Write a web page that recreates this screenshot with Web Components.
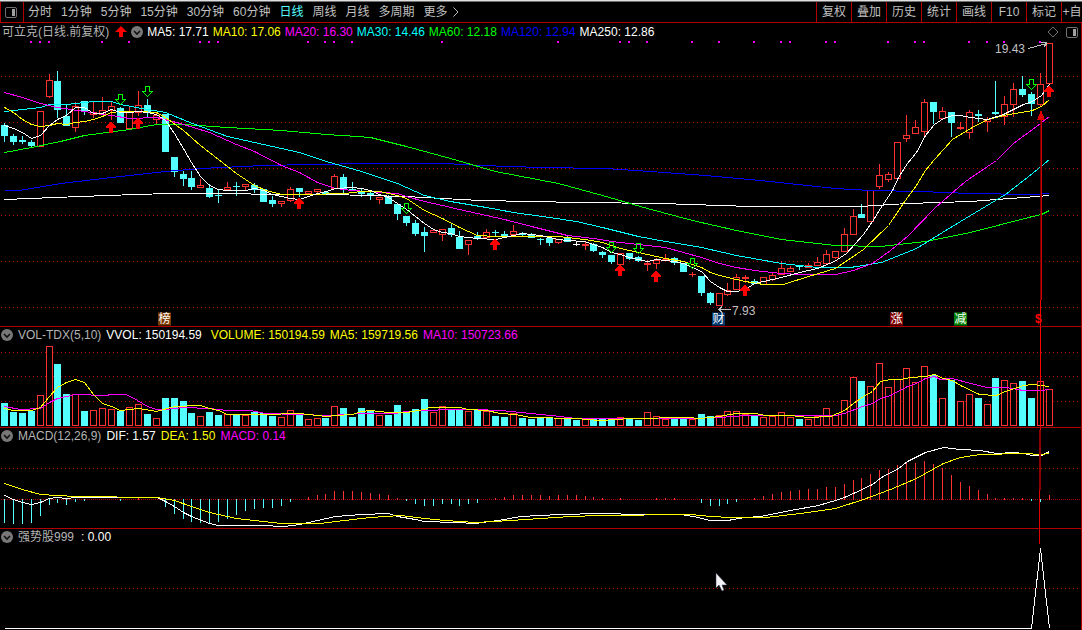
<!DOCTYPE html>
<html lang="zh-CN">
<head>
<meta charset="utf-8">
<title>可立克 日线</title>
<style>
html, body { margin: 0; background: #000; }
body { font: 12px/16px "Liberation Sans", "Noto Sans CJK SC", sans-serif; color: #c0c0c0; overflow: hidden; }
</style>
</head>
<body>
<stock-app></stock-app>
<script>
const RED = '#ff3232', CYAN = '#54ffff', WIDTH = 1081;
const slotX = i => 4 + 9 * i - Math.floor((i + 9) / 15);

// kind (u hollow red, d solid cyan, r solid red, w white), high, body top, body bottom, low
const CANDLES = `d123,125,135,141 d134,136,141,144 d136,140,141,143 d140,142,145,147 u111,111,146,146 u74,80,96,97 d71,81,109,117 d105,116,125,125 u102,106,127,131 d101,101,110,114
u101,112,114,117 u97,110,114,114 u102,106,110,119 d107,108,122,122 u107,112,128,128 u91,105,112,115 d99,105,111,116 u113,115,119,124 d114,114,151,151 d157,157,171,176
d171,174,178,185 d171,178,186,189 u179,185,187,187 d184,188,196,197 d190,195,195,202 u182,187,189,189 d182,186,186,195 u184,184,186,189 d183,185,189,192 d189,189,201,201
d196,200,203,206 u201,201,203,206 u187,189,200,201 d188,188,191,196 u191,191,193,193 u189,189,191,193 d191,192,193,194 u174,176,188,188 d174,177,188,194 d182,189,190,190
d188,191,193,196 d192,193,195,199 u197,197,199,203 d195,197,203,203 d204,204,213,219 d216,216,222,225 d220,223,233,235 d227,232,235,251 u229,230,232,232 u229,229,234,240
d224,228,234,236 d231,237,248,248 u240,240,244,254 d232,236,237,239 u229,232,237,238 d230,232,232,235 d231,234,235,235 u225,231,234,234 d232,233,234,235 d233,235,237,237
d238,239,239,244 d237,238,242,245 u239,239,242,243 d236,238,241,241 w242,244,244,245 r242,244,245,249 d243,244,250,251 d251,252,254,257 d255,255,261,263 u253,253,264,264
d253,253,258,259 d256,257,260,261 r260,263,264,270 u258,260,263,268 r254,259,259,260 d257,258,262,264 d263,263,271,271 r272,274,274,276 d276,276,292,295 d292,293,302,304
u293,293,305,305 u283,290,294,295 u274,277,289,289 r275,277,278,282 d279,281,283,283 u277,277,284,284 u273,275,279,280 u261,268,274,274 u266,268,271,271 d265,266,266,269
u263,265,266,266 u257,262,265,265 u250,254,263,263 u251,251,257,258 u228,234,251,251 u209,216,234,234 d204,214,217,217 u190,190,221,221 u164,175,186,188 u172,174,179,181
u142,142,178,178 u115,135,138,141 u120,127,133,133 u99,102,131,135 d102,102,111,123 u107,111,118,118 d112,112,122,136 r122,127,128,129 u110,112,132,138 d110,114,115,121
u117,119,121,131 d81,112,113,114 u96,104,116,124 u83,89,104,116 d76,89,94,96 d92,94,103,115 u73,84,104,105 u43,43,83,83`.split(/\s+/)
  .map(s => [s[0], ...s.slice(1).split(',').map(Number)]);

const VOLUME = [403,412,413,411,395,346,364,394,394,411,410,408,409,411,407,404,414,418,398,398,401,413,416,412,415,414,415,415,412,413,416,417,410,415,419,418,418,406,408,417,408,410,415,415,405,412,409,399,412,406,409,409,411,409,411,416,417,413,418,419,418,418,418,418,420,419,419,419,419,417,419,420,412,416,419,418,418,419,414,416,415,411,411,414,415,417,416,412,417,419,419,416,408,415,400,377,381,386,363,387,379,368,382,366,375,398,380,401,394,398,404,378,380,383,381,398,381,389];

const HIST = [522,523,523,522,515,504,502,504,501,500,0,0,0,500,0,498,0,0,506,513,518,521,522,522,521,518,514,510,508,507,507,505,501,0,497,495,494,491,491,491,492,493,494,495,498,500,503,505,505,503,503,505,503,502,0,498,497,495,495,495,495,496,495,495,495,496,497,498,0,498,0,0,0,498,498,498,0,0,502,505,505,503,501,0,498,496,494,492,491,490,489,489,487,487,484,480,478,474,470,469,465,463,463,461,464,468,475,482,486,490,494,498,498,498,498,500,501,495];

const LINES = {
  main: [
    ['#ffffff', '4,199 80,196 135,194 170,193 330,194 405,196 480,200 580,202 660,203 750,206 860,206 907,203 970,201 1049,195'],
    ['#0000ff', '4,190 18,190 31,188 60,183 111,177 165,171 200,168 263,165 310,164 370,163 445,163 480,165 540,167 605,168 650,171 705,175 760,180 835,188 870,190 920,191 970,193 1030,194 1049,193'],
    ['#00ff00', '4,152 31,147 60,141 84,135 129,129 156,124 183,124 227,127 281,130 326,134 357,136 370,137 406,146 450,158 495,171 558,183 602,195 647,208 692,220 736,230 781,239 835,245 880,246 925,241 970,232 1032,216 1041,214 1049,210'],
    ['#00ffff', '4,111 22,109 40,107 49,104 66,104 84,102 93,101 111,101 120,104 147,109 165,112 192,123 227,136 263,144 299,152 326,161 361,171 397,183 424,195 450,201 486,207 513,212 549,217 576,221 602,227 638,236 665,241 701,247 736,255 781,263 817,267 850,267 881,262 916,248 960,221 1005,194 1032,173 1049,159'],
    ['#ff00ff', '4,92 22,97 40,103 57,107 84,111 111,115 129,118 156,117 180,123 209,132 236,144 254,151 281,165 299,172 317,182 335,188 352,190 397,193 406,196 424,201 442,205 459,209 477,213 504,219 531,226 567,235 593,238 611,241 638,244 665,247 683,252 701,257 719,263 736,267 754,270 781,273 799,274 835,274 853,270 872,263 890,250 907,236 935,207 965,181 996,160 1013,143 1032,129 1049,116'],
    ['#ffff00', '4,107 13,112 22,119 31,124 40,126 49,125 57,123 66,124 75,122 84,121 93,119 102,116 111,112 120,111 138,111 156,112 165,117 183,130 200,145 218,159 236,173 254,185 266,190 281,194 308,194 344,193 361,191 379,191 397,195 406,198 424,210 442,218 459,227 477,235 495,236 522,236 558,236 567,237 584,239 602,242 620,248 647,254 665,258 683,261 692,264 701,267 710,272 719,275 736,279 745,281 763,284 783,284 808,276 835,268 863,249 888,225 907,197 916,185 925,170 934,159 952,139 970,128 987,119 1003,115 1032,110 1041,106 1049,99'],
    ['#ffffff', '4,125 13,128 22,132 31,138 40,135 49,125 57,119 66,115 75,107 84,107 93,113 102,113 111,109 120,112 129,112 138,111 147,112 156,114 165,120 174,133 183,148 191,162 200,176 209,185 218,189 227,190 245,190 254,188 263,190 272,194 281,196 290,198 299,199 308,196 317,193 326,191 335,188 352,187 361,188 370,190 379,194 388,197 397,203 406,209 415,216 424,223 433,229 442,232 450,233 459,236 468,237 477,238 495,239 504,237 513,235 522,233 531,234 540,235 549,237 558,239 567,240 584,241 593,244 602,247 611,252 620,254 629,257 638,259 647,261 656,259 674,261 683,263 692,267 701,271 710,281 719,287 727,291 736,291 745,289 754,283 763,281 781,277 799,272 817,268 834,261 846,253 863,234 872,221 880,208 892,190 898,177 907,163 916,152 925,135 934,124 943,118 952,115 960,115 970,117 987,119 1003,114 1013,109 1023,104 1032,101 1041,95 1049,84']
  ],
  vol: [
    ['#ff00ff', '4,406 20,409 40,408 49,402 57,398 75,394 105,395 111,394 125,394 132,397 147,406 156,409 165,409 183,407 209,408 227,410 250,410 265,413 330,415 361,413 395,413 405,411 425,410 450,409 475,409 500,410 530,413 560,416 575,418 690,418 719,417 745,415 835,415 844,413 862,406 872,403 880,398 890,395 907,386 916,383 925,378 934,376 940,379 952,378 970,383 987,387 1005,387 1023,390 1040,390 1049,389'],
    ['#ffff00', '4,408 13,410 31,410 40,407 49,396 57,387 66,382 75,379 84,382 93,394 102,403 111,406 120,410 138,408 156,411 174,406 200,405 209,408 218,410 227,414 263,414 299,413 326,416 335,415 352,414 361,411 370,410 388,412 406,412 424,409 429,407 459,407 468,409 486,410 500,413 515,414 530,417 575,418 600,420 630,418 687,417 700,418 719,416 735,413 755,413 765,415 790,415 808,417 830,416 844,410 853,403 863,396 872,391 880,381 890,379 900,379 910,377 925,376 934,374 943,378 952,380 960,385 979,394 996,395 1005,391 1023,385 1032,384 1049,386']
  ],
  macd: [
    ['#ffffff', '4,495 13,499 22,502 31,504 40,502 49,498 57,497 66,498 75,497 157,497 165,501 174,506 183,512 191,516 209,523 218,525 260,525 284,526 299,524 317,520 335,516 361,514 388,513 397,516 415,519 424,521 455,522 475,523 504,519 520,516 560,514 600,513 640,514 680,514 693,516 710,520 727,520 745,517 760,516 790,510 818,505 835,500 844,497 853,493 872,484 881,477 898,468 907,461 925,452 943,447 960,449 980,450 996,453 1013,452 1023,453 1032,455 1041,455 1049,451'],
    ['#ffff00', '4,483 22,489 40,494 57,495 75,496 157,497 174,500 191,506 209,512 236,518 263,521 281,523 320,523 344,520 370,517 400,515 424,518 445,520 475,522 510,520 540,518 570,516 600,515 690,514 710,516 730,517 765,517 800,513 835,508 863,499 890,489 916,478 943,463 960,457 980,454 1023,453 1041,454 1049,453']
  ],
  signal: [['#ffffff', '4,628 1031,628 1040,548 1049,628']]
};

const rect = (x, y, w, h, fill) => `<rect x="${x}" y="${y}" width="${w}" height="${h}" fill="${fill}"/>`;
const hollow = (x, y, w, h) => `<rect x="${x + .5}" y="${y + .5}" width="${w - 1}" height="${h - 1}" fill="#000" stroke="${RED}"/>`;
const dotted = (y, gap = 3, color = '#b00000') => `<line x1="1" x2="${WIDTH}" y1="${y + .5}" y2="${y + .5}" stroke="${color}" stroke-dasharray="1 ${gap}"/>`;
const polylines = list => list.map(([c, p]) => `<polyline transform="translate(.5 .5)" points="${p}" fill="none" stroke="${c}"/>`).join('');

function candles() {
  return CANDLES.map(([kind, hi, top, bottom, lo], i) => {
    const x = slotX(i), c = { u: RED, r: RED, d: CYAN, w: '#ffffff' }[kind];
    const wick = rect(x, hi, 1, lo - hi + 1, c);
    return wick + (kind === 'u' ? hollow(x - 3, top, 7, Math.max(bottom - top + 1, 3)) : rect(x - 3, top, 7, bottom - top + 1, c));
  }).join('');
}
const buyArrow = (x, y) => `<path transform="translate(${x} ${y})" fill="#ff0000" d="M0 0h1v1h1v1h1v1h1v1h1v2h-3v5h-4v-5h-3v-2h1v-1h1v-1h1v-1h1v-1h1z"/>`;
const sellArrow = (x, y) => `<path transform="translate(${x}.5 ${y}.5)" fill="none" stroke="#00ff00" d="M-2 0h4v5h3l-5 5l-5 -5h3z"/>`;

// vertical marker that runs through the panels
const beam = rect(1040, 118, 1, 182, '#700000') + rect(1041, 118, 1, 182, '#d00000') + rect(1040, 300, 1, 130, '#ff0000')
  + rect(1039, 430, 2, 60, '#900000') + rect(1039, 490, 1, 54, '#e00000');

const PLOTS = {
  main: () => [76, 122, 168, 215, 261, 307].map(y => dotted(y)).join('') + candles() + polylines(LINES.main)
    + [31,40,49,102,129,200,209,218,308,325,334,352,442,558,620,629,647,692,719,754,781,790,826,835,888,915,924,969,987,1004,1040].map(x => rect(x - 1, 41, 2, 2, '#ff00ff')).join('')
    + [[120,94],[147,86],[406,203],[611,242],[638,243],[692,258],[1031,79]].map(p => sellArrow(...p)).join('')
    + [[111,122],[138,118],[299,198],[495,239],[620,265],[656,271],[745,285],[1049,86]].map(p => buyArrow(...p)).join('')
    + beam + `<path d="M1041 110l4 10h-8z" fill="#e00000"/>`
    + `<path d="M1028 48.500L1047 43.500M1041 42.500h6M1044 46.500l3-3" fill="none" stroke="#c0c0c0"/>`
    + `<path d="M719 309.500h12M722 306.500l-3 3l3 3" fill="none" stroke="#c0c0c0"/>`,
  vol: () => [352, 376, 401].map(y => dotted(y)).join('')
    + VOLUME.map((y, i) => 'ur'.includes(CANDLES[i][0]) ? hollow(slotX(i) - 3, y, 7, 426 - y) : rect(slotX(i) - 3, y, 7, 426 - y, CYAN)).join('')
    + polylines(LINES.vol) + beam,
  macd: () => dotted(468) + dotted(499, 1)
    + HIST.map((y, i) => !y ? '' : y < 499 ? rect(slotX(i), y, 1, 500 - y, RED) : rect(slotX(i), 499, 1, y - 498, CYAN)).join('')
    + polylines(LINES.macd) + beam,
  signal: () => dotted(588) + polylines(LINES.signal) + beam
};

function define(name, html, setup) {
  const template = document.createElement('template');
  template.innerHTML = html;
  customElements.define(name, class extends HTMLElement {
    connectedCallback() {
      if (this.shadowRoot) return;
      this.attachShadow({ mode: 'open' }).append(template.content.cloneNode(true));
      if (setup) setup(this, this.shadowRoot);
    }
  });
}

define('layout-icon', `<style>
  :host { display: block; width: 12px; height: 11px; }
  svg { display: block; }
  </style><svg width="12" height="11" viewBox="0 0 12 11"><rect x=".5" y=".5" width="11" height="10" rx="1.500" fill="none" stroke="#707070"/><rect x="7" y="2" width="3" height="7" fill="#a0a0a0"/></svg>`);

define('fold-button', `<style>
  :host { display: block; width: 12px; height: 12px; }
  button { display: block; width: 12px; height: 12px; padding: 0; border: 0; background: none; }
  svg { display: block; }
  </style><button type="button" aria-label="展开"><svg width="12" height="12" viewBox="0 0 12 12"><circle cx="6" cy="6" r="6" fill="#787878"/><path d="M3 5l3 3l3-3" fill="none" stroke="#101010" stroke-width="1.600"/></svg></button>`);

define('period-tab', `<style>
  :host { display: block; }
  a { display: block; color: #c0c0c0; text-decoration: none; white-space: nowrap; }
  :host([active]) a { color: #54ffff; }
  </style><a href="#"><slot></slot></a>`);

define('tool-button', `<style>
  :host { display: block; flex: 0 0 35px; box-sizing: border-box; border-left: 1px solid #b00000; }
  :host([narrow]) { flex-basis: 21px; }
  button { display: block; width: 100%; height: 100%; padding: 0; border: 0; background: none; color: inherit; font: inherit; white-space: nowrap; text-align: center; }
  </style><button type="button"><slot></slot></button>`);

define('top-bar', `<style>
  :host { display: flex; height: 20px; border-bottom: 1px solid #b00000; border-top: 2px solid #808080; border-image: linear-gradient(#e0e0e0 0 1px, #707070 1px 2px, #b00000 2px) 2 0 1 0; }
  .layout { display: flex; align-items: center; padding: 0 6px 0 4px; border: solid #b00000; border-width: 0 1px; }
  nav { display: flex; align-items: center; gap: 9px; padding-left: 4px; flex: 1; overflow: hidden; }
  nav svg { display: block; margin-left: -4px; }
  .tools { display: flex; }
  </style>
  <div class="layout"><layout-icon></layout-icon></div>
  <nav>
    <period-tab>分时</period-tab><period-tab>1分钟</period-tab><period-tab>5分钟</period-tab><period-tab>15分钟</period-tab><period-tab>30分钟</period-tab><period-tab>60分钟</period-tab><period-tab active>日线</period-tab><period-tab>周线</period-tab><period-tab>月线</period-tab><period-tab>多周期</period-tab><period-tab>更多</period-tab>
    <svg width="6" height="10" viewBox="0 0 6 10"><path d="M.5 .5L5 5L.5 9.500" fill="none" stroke="#c0c0c0"/></svg>
  </nav>
  <div class="tools">
    <tool-button>复权</tool-button><tool-button>叠加</tool-button><tool-button>历史</tool-button><tool-button>统计</tool-button><tool-button>画线</tool-button><tool-button>F10</tool-button><tool-button>标记</tool-button><tool-button narrow>+自</tool-button>
  </div>`);

define('value-label', `<style>
  :host { display: block; white-space: nowrap; color: #fff; }
  :host([tone="title"]) { color: #b4b4b4; }
  :host([tone="yellow"]) { color: #ffff00; }
  :host([tone="magenta"]) { color: #ff00ff; }
  :host([tone="cyan"]) { color: #00ffff; }
  :host([tone="green"]) { color: #00ff00; }
  :host([tone="blue"]) { color: #0000ff; }
  </style><slot></slot>`);

// A note pinned to a point of the plot; x and y are plot units
define('plot-note', `<style>
  :host { position: absolute; display: block; white-space: nowrap; line-height: 14px; transform: translateY(-50%); }
  :host([tone]) { color: #fff; width: 13px; height: 13px; line-height: 13px; text-align: center; }
  :host([tone="brown"]) { background: #7b3b00; }
  :host([tone="navy"]) { background: #003a70; }
  :host([tone="maroon"]) { background: #800000; }
  :host([tone="green"]) { background: #008000; }
  :host([tone="red"]) { color: #ff0000; width: auto; font-weight: bold; }
  </style><slot></slot>`, el => {
    el.style.left = `${el.getAttribute('x') / WIDTH * 100}%`;
    el.style.top = `${(el.getAttribute('y') - 23) / 303 * 100}%`;
  });

define('chart-panel', `<style>
  :host { display: grid; position: relative; min-height: 0; min-width: 0; overflow: hidden; border-right: 1px solid #b00000; border-bottom: 1px solid #b00000; }
  :host([plot="signal"]) { border-bottom: 0; }
  .plot { grid-area: 1 / 1; display: block; width: 100%; height: 100%; min-height: 0; }
  header { grid-area: 1 / 1; align-self: start; z-index: 1; display: flex; align-items: center; gap: 5px; height: 16px; padding-left: 1px; }
  :host([plot="main"]) header { height: 18px; gap: 4px; padding-left: 2px; }
  </style>
  <svg class="plot" preserveAspectRatio="none" shape-rendering="crispEdges"></svg>
  <header><slot name="head"></slot></header>
  <slot></slot>`, (el, root) => {
    const svg = root.querySelector('svg');
    svg.setAttribute('viewBox', `0 ${el.getAttribute('top')} ${WIDTH} ${el.getAttribute('span')}`);
    svg.innerHTML = PLOTS[el.getAttribute('plot')]();
  });

define('mouse-pointer', `<style>
  :host { position: absolute; left: 66%; top: 91%; display: block; }
  svg { display: block; }
  </style><svg width="14" height="19" viewBox="-2 0 14 19"><path d="M0 0v15l3-3l3 6l2-1l-2-5h5z" fill="#f4f4f8" stroke="#303048" stroke-width=".5"/></svg>`);

define('stock-app', `<style>
  :host { position: relative; display: grid; grid-template-rows: auto 304fr 101fr 101fr 101fr; grid-template-columns: minmax(0, 1fr); height: 100vh; overflow: hidden; }
  .wide { margin-left: 4px; }
  .spaced { margin-left: 2px; }
  .corner { display: flex; align-items: center; gap: 7px; margin-left: auto; padding-right: 3px; }
  svg { display: block; }
  </style>
  <top-bar></top-bar>
  <chart-panel plot="main" top="23" span="303">
    <value-label slot="head" tone="title">可立克(日线.前复权)</value-label>
    <svg slot="head" class="spaced" width="12" height="12" viewBox="0 0 12 12"><path d="M6 0l6 6h-4v5h-4v-5h-4z" fill="#ff0000"/></svg>
    <fold-button slot="head"></fold-button>
    <value-label slot="head">MA5: 17.71</value-label>
    <value-label slot="head" tone="yellow">MA10: 17.06</value-label>
    <value-label slot="head" tone="magenta">MA20: 16.30</value-label>
    <value-label slot="head" tone="cyan">MA30: 14.46</value-label>
    <value-label slot="head" tone="green">MA60: 12.18</value-label>
    <value-label slot="head" tone="blue">MA120: 12.94</value-label>
    <value-label slot="head">MA250: 12.86</value-label>
    <div slot="head" class="corner"><svg width="12" height="12" viewBox="0 0 12 12"><path d="M6 1l5 5l-5 5l-5-5z" fill="none" stroke="#707070"/></svg><layout-icon></layout-icon></div>
    <plot-note x="995" y="49">19.43</plot-note>
    <plot-note x="732" y="311">7.93</plot-note>
    <plot-note x="158" y="319" tone="brown">榜</plot-note>
    <plot-note x="712" y="319" tone="navy">财</plot-note>
    <plot-note x="890" y="319" tone="maroon">涨</plot-note>
    <plot-note x="954" y="319" tone="green">减</plot-note>
    <plot-note x="1035" y="319" tone="red">$</plot-note>
  </chart-panel>
  <chart-panel plot="vol" top="327" span="100">
    <fold-button slot="head"></fold-button>
    <value-label slot="head" tone="title">VOL-TDX(5,10)</value-label>
    <value-label slot="head">VVOL: 150194.59</value-label>
    <value-label slot="head" tone="yellow" class="wide">VOLUME: 150194.59</value-label>
    <value-label slot="head" tone="yellow">MA5: 159719.56</value-label>
    <value-label slot="head" tone="magenta">MA10: 150723.66</value-label>
  </chart-panel>
  <chart-panel plot="macd" top="428" span="100">
    <fold-button slot="head"></fold-button>
    <value-label slot="head" tone="title">MACD(12,26,9)</value-label>
    <value-label slot="head">DIF: 1.57</value-label>
    <value-label slot="head" tone="yellow">DEA: 1.50</value-label>
    <value-label slot="head" tone="magenta">MACD: 0.14</value-label>
  </chart-panel>
  <chart-panel plot="signal" top="529" span="101">
    <fold-button slot="head"></fold-button>
    <value-label slot="head" tone="title">强势股999</value-label>
    <value-label slot="head" class="spaced">: 0.00</value-label>
  </chart-panel>
  <mouse-pointer></mouse-pointer>`);
</script>
</body>
</html>
